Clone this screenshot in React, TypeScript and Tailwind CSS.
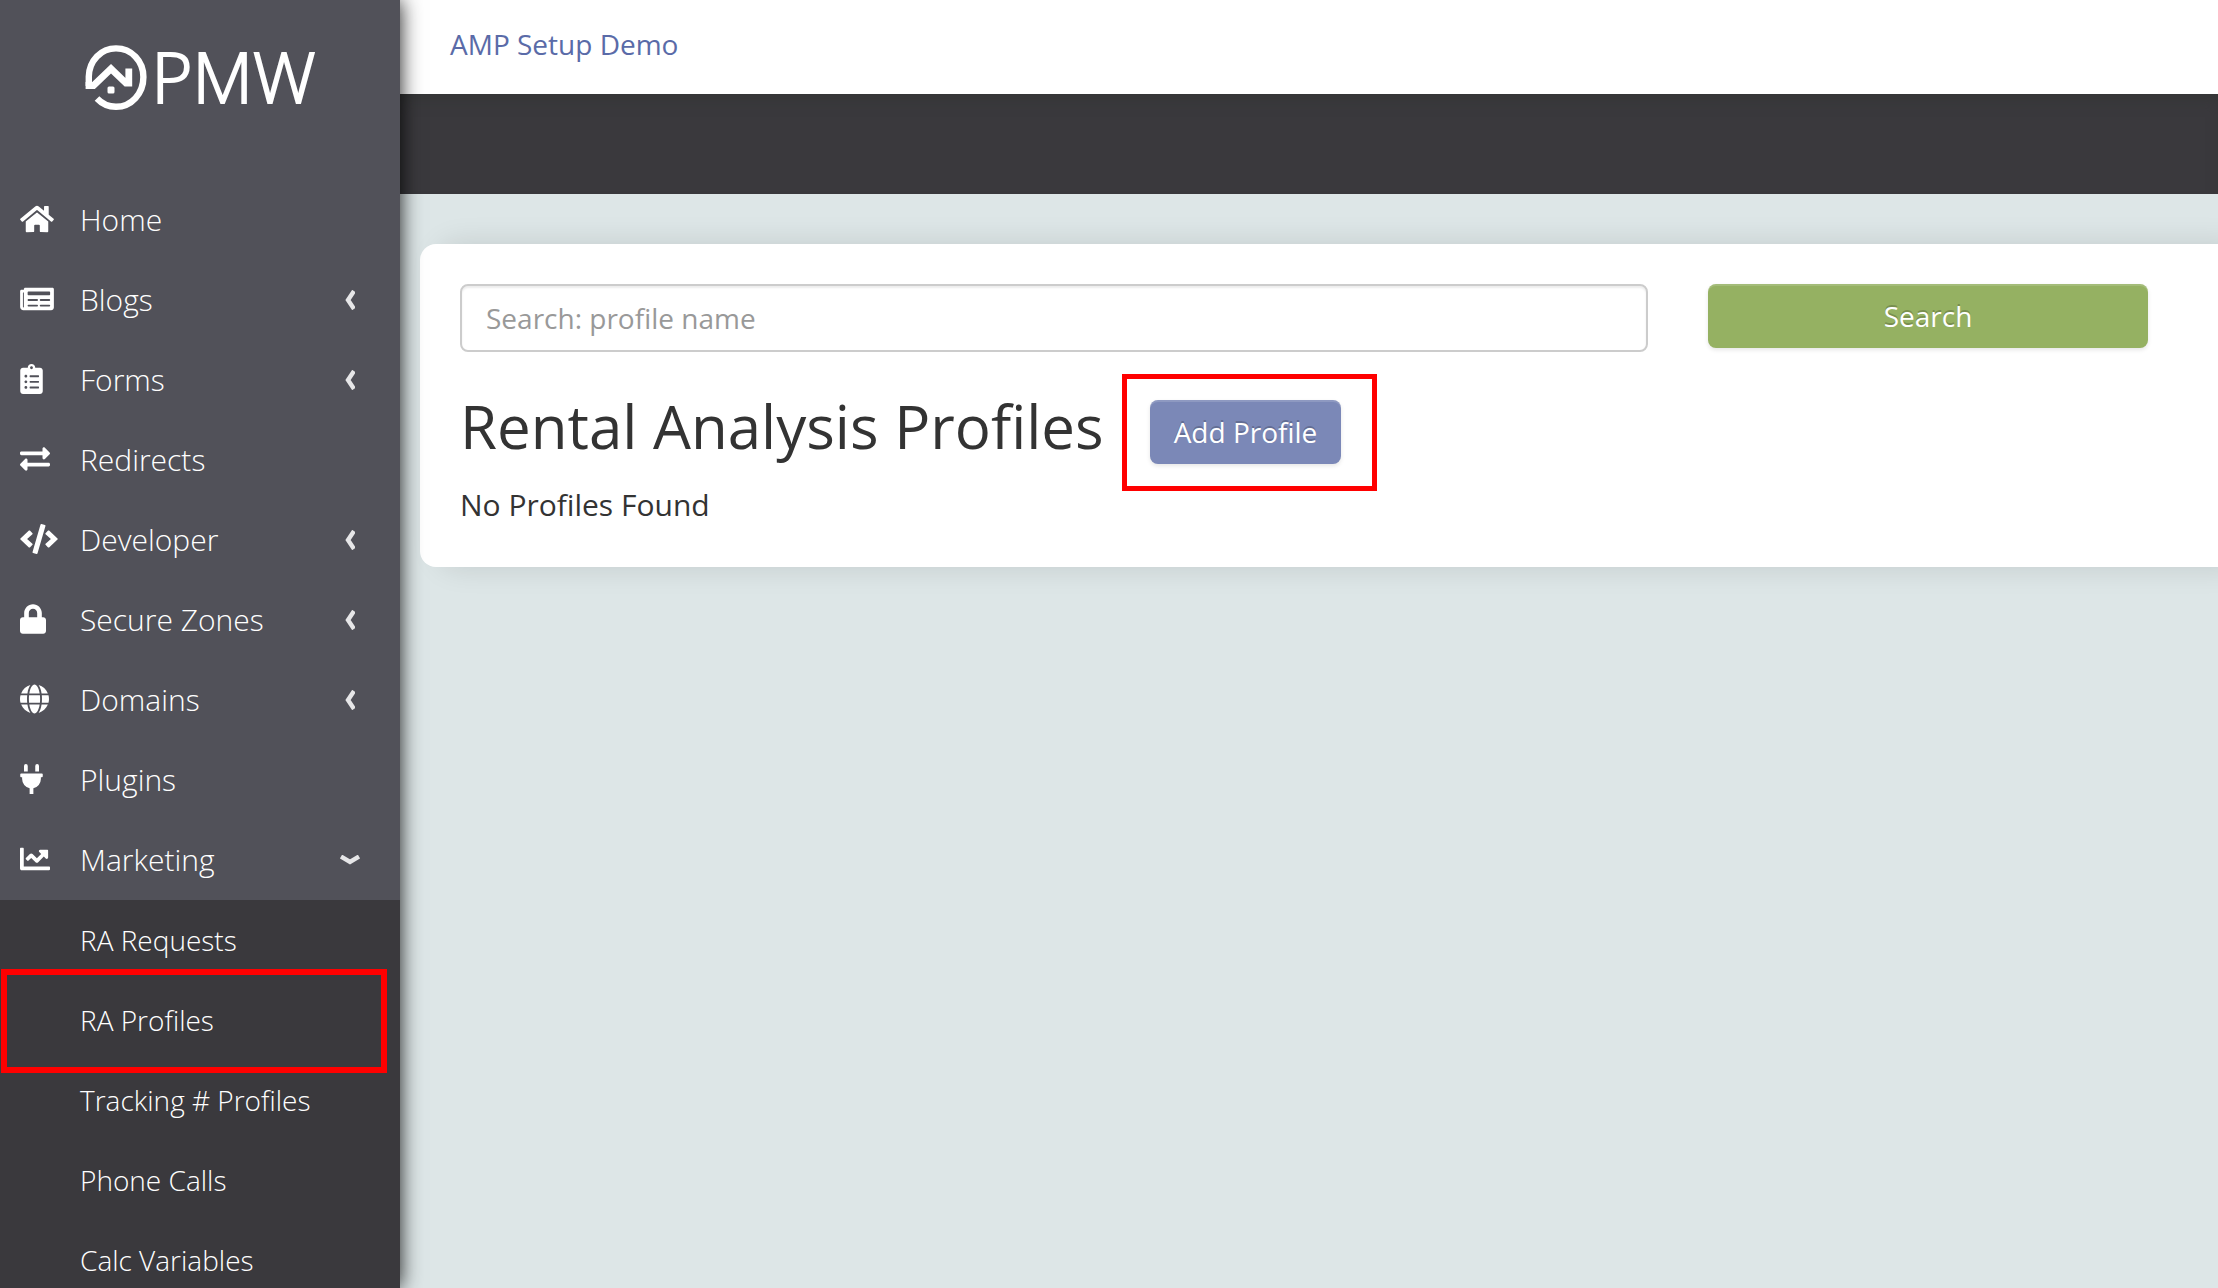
import React from "react";
import type { IconType } from "react-icons";
import {
  FaHome,
  FaNewspaper,
  FaClipboardList,
  FaExchangeAlt,
  FaCode,
  FaLock,
  FaGlobe,
  FaPlug,
  FaChartLine,
} from "react-icons/fa";

type NavItem = { label: string; icon: IconType; iconWidth: string; menu?: "closed" | "open" };

const navItems: NavItem[] = [
  { label: "Home", icon: FaHome, iconWidth: "w-[34px]" },
  { label: "Blogs", icon: FaNewspaper, iconWidth: "w-[34px]", menu: "closed" },
  { label: "Forms", icon: FaClipboardList, iconWidth: "w-[23px]", menu: "closed" },
  { label: "Redirects", icon: FaExchangeAlt, iconWidth: "w-[30px]" },
  { label: "Developer", icon: FaCode, iconWidth: "w-[38px]", menu: "closed" },
  { label: "Secure Zones", icon: FaLock, iconWidth: "w-[26px]", menu: "closed" },
  { label: "Domains", icon: FaGlobe, iconWidth: "w-[29px]", menu: "closed" },
  { label: "Plugins", icon: FaPlug, iconWidth: "w-[23px]" },
  { label: "Marketing", icon: FaChartLine, iconWidth: "w-[30px]", menu: "open" },
];

const marketingItems = [
  "RA Requests",
  "RA Profiles",
  "Tracking # Profiles",
  "Phone Calls",
  "Calc Variables",
];

function Logo() {
  return (
    <a href="#" className="flex h-[180px] items-start justify-center pt-[45px] text-white">
      <svg viewBox="0 0 62 66" className="h-[66px] w-[62px] shrink-0" fill="none" stroke="currentColor" aria-hidden="true">
        <path
          d="M3.8 41 V31.5 C4.2 15.5 16 3.4 31 3.4 C46.5 3.4 58.4 16 58.4 32 C58.4 48.5 46.5 61.8 31 61.8 C23 61.8 17 58.8 12 53.5"
          strokeWidth="6.4"
        />
        <path d="M0.6 40.5 H8.5 L26 23.8 L41 38.2 H43.8 V23.5" strokeWidth="6.8" />
        <rect x="22.5" y="41.5" width="7" height="7" rx="1.5" fill="currentColor" stroke="none" />
      </svg>
      <span className="ml-[5px] text-[70px] leading-[62px] font-light [-webkit-text-stroke:2px_white]">PMW</span>
    </a>
  );
}

function Chevron({ open }: { open: boolean }) {
  return open ? (
    <svg viewBox="0 0 20 10" className="h-[10px] w-5" fill="none" stroke="#e6e6e8" strokeWidth="4.4" aria-hidden="true">
      <path d="M1 1.5 L10 7 L19 1.5" />
    </svg>
  ) : (
    <svg viewBox="0 0 10 20" className="mr-[5px] h-5 w-[10px]" fill="none" stroke="#e6e6e8" strokeWidth="4.4" aria-hidden="true">
      <path d="M9 1 L3 10 L9 19" />
    </svg>
  );
}

function Sidebar() {
  return (
    <aside className="relative z-10 w-[400px] shrink-0 bg-[#515159] text-white shadow-[0_0_20px_rgba(0,0,0,0.9)]">
      <Logo />
      <nav>
        <ul>
          {navItems.map(({ label, icon: Icon, iconWidth, menu }) => (
            <li key={label}>
              <a href="#" className="flex h-20 items-center pr-10 pl-5 text-[30px] font-light">
                <span className="w-[60px] pb-[3px]">
                  <Icon className={`h-[30px] ${iconWidth}`} />
                </span>
                <span className="flex-1 pb-[2px]">{label}</span>
                {menu && <Chevron open={menu === "open"} />}
              </a>
            </li>
          ))}
        </ul>
        <ul className="bg-[#3a393d]">
          {marketingItems.map((label) => (
            <li key={label} className="relative">
              <a href="#" className="flex h-20 items-center pl-20 text-[28px] font-light">
                {label}
              </a>
              {label === "RA Profiles" && (
                <span className="pointer-events-none absolute -top-[11px] right-[13px] -bottom-[13px] left-px border-[6px] border-[#ff0000]" />
              )}
            </li>
          ))}
        </ul>
      </nav>
    </aside>
  );
}

export default function App() {
  return (
    <div className="flex h-screen overflow-hidden bg-[#dde6e7] font-['Open_Sans',sans-serif] text-[#333333]">
      <Sidebar />
      <div className="min-w-0 flex-1">
        <header>
          <div className="flex h-[94px] items-start bg-white px-[50px] pt-6">
            <a href="#" className="text-[28px] leading-10 text-[#5a6ba8]">
              AMP Setup Demo
            </a>
          </div>
          <div className="h-[100px] bg-[#3a393d] shadow-[inset_0_10px_16px_-6px_rgba(48,52,48,0.6)]" />
        </header>
        <main className="pt-[50px] pl-5">
          <section className="rounded-l-2xl bg-white pt-10 pr-[70px] pb-10 pl-10 shadow-[20px_0_30px_rgba(0,0,0,0.12)]">
            <form className="grid grid-cols-[27fr_10fr] items-start gap-x-[60px]" onSubmit={(e) => e.preventDefault()}>
              <input
                type="text"
                aria-label="Search: profile name"
                placeholder="Search: profile name"
                className="h-[68px] w-full min-w-0 rounded-lg border-2 border-[#cccccc] px-6 text-[28px] shadow-[inset_0_2px_2px_rgba(0,0,0,0.075)] placeholder:text-[#999999]"
              />
              <button
                type="submit"
                className="h-16 rounded-lg bg-[#95b162] text-[28px] text-white shadow-[inset_0_2px_0_rgba(255,255,255,0.15),0_2px_4px_rgba(0,0,0,0.1)] [text-shadow:0_-2px_0_rgba(0,0,0,0.2)]"
              >
                Search
              </button>
            </form>
            <div className="mt-[18px] flex items-center">
              <h1 className="text-[60px] leading-[112px]">Rental Analysis Profiles</h1>
              <div className="relative mt-3 ml-[46px]">
                <button
                  type="button"
                  className="block h-16 rounded-lg bg-[#7b88b7] px-6 text-[28px] whitespace-nowrap text-white shadow-[inset_0_2px_0_rgba(255,255,255,0.15),0_2px_4px_rgba(0,0,0,0.1)] [text-shadow:0_-2px_0_rgba(0,0,0,0.2)]"
                >
                  Add Profile
                </button>
                <span className="pointer-events-none absolute -top-[26px] -right-9 -bottom-[27px] -left-7 border-[5px] border-[#ff0000]" />
              </div>
            </div>
            <p className="text-[30px] leading-[45px]">No Profiles Found</p>
          </section>
        </main>
      </div>
    </div>
  );
}
